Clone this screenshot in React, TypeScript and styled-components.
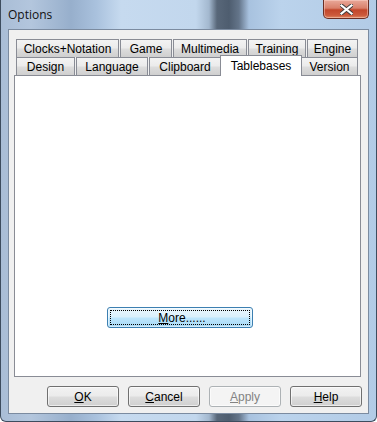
import React from "react";
import styled, { createGlobalStyle } from "styled-components";

const GlobalStyle = createGlobalStyle`
  html, body {
    margin: 0;
    padding: 0;
    background: #ffffff;
  }
  body {
    font-family: "Liberation Sans", Arial, sans-serif;
    font-size: 12px;
  }
`;

const topRow = [
  { label: "Clocks+Notation", width: 103 },
  { label: "Game", width: 52 },
  { label: "Multimedia", width: 74 },
  { label: "Training", width: 58 },
  { label: "Engine", width: 51 },
];

const frontRow = [
  { label: "Design", width: 59 },
  { label: "Language", width: 72 },
  { label: "Clipboard", width: 72 },
  { label: "Tablebases", width: 78, selected: true },
  { label: "Version", width: 57 },
];

const buttons = [
  { key: "O", rest: "K" },
  { key: "C", rest: "ancel" },
  { key: "A", rest: "pply", disabled: true },
  { key: "H", rest: "elp" },
];

const App = () => {
  return (
    <>
      <GlobalStyle />
      <Window>
        <TitleBar>
          <Title>Options</Title>
          <CloseButton>
            <svg width="13" height="11" viewBox="0 0 13 11">
              <path
                d="M1.5 1.5 L11.5 9.5 M11.5 1.5 L1.5 9.5"
                stroke="#3b3b3b"
                strokeWidth="4"
                strokeLinecap="square"
              />
              <path
                d="M1.5 1.5 L11.5 9.5 M11.5 1.5 L1.5 9.5"
                stroke="#ffffff"
                strokeWidth="2.2"
                strokeLinecap="square"
              />
            </svg>
          </CloseButton>
        </TitleBar>
        <Client>
          <TabRow>
            {topRow.map((t) => (
              <Tab key={t.label} width={t.width}>
                {t.label}
              </Tab>
            ))}
          </TabRow>
          <TabRow>
            {frontRow.map((t) =>
              t.selected ? (
                <SelectedTab key={t.label} width={t.width}>
                  {t.label}
                </SelectedTab>
              ) : (
                <Tab key={t.label} width={t.width}>
                  {t.label}
                </Tab>
              )
            )}
          </TabRow>
          <Panel>
            <MoreButton>
              <FocusRing>
                <u>M</u>ore......
              </FocusRing>
            </MoreButton>
          </Panel>
          <ButtonBar>
            {buttons.map((b) => (
              <DialogButton key={b.key} disabled={b.disabled}>
                <u>{b.key}</u>
                {b.rest}
              </DialogButton>
            ))}
          </ButtonBar>
        </Client>
      </Window>
    </>
  );
};

const Window = styled.div`
  width: 377px;
  height: 422px;
  box-sizing: border-box;
  display: flex;
  flex-direction: column;
  border: 1px solid #3d4c5e;
  border-top: none;
  border-radius: 0 0 6px 6px;
  background: linear-gradient(
    to right,
    #a9bdd6 0px,
    #b3c6dd 30px,
    #97afcc 70px,
    #a9c1dd 95px,
    #c6daef 120px,
    #c2d7ed 195px,
    #a3b8cf 208px,
    #586779 216px,
    #4e5d6f 228px,
    #64758a 238px,
    #a8c2df 248px,
    #bbd3ec 280px,
    #b2cbe6 377px
  );
`;

const TitleBar = styled.div`
  height: 29px;
  flex: none;
  display: flex;
  align-items: flex-start;
  justify-content: space-between;
  padding: 0 7px 0 7px;
`;

const Title = styled.div`
  font-family: "Open Sans", "Liberation Sans", sans-serif;
  font-size: 12px;
  color: #111;
  margin-top: 6px;
`;

const CloseButton = styled.div`
  width: 46px;
  height: 19px;
  box-sizing: border-box;
  display: flex;
  align-items: center;
  justify-content: center;
  border: 1px solid #6a2e24;
  border-top: none;
  border-radius: 0 0 5px 5px;
  background: linear-gradient(
    to bottom,
    #e9a99a 0%,
    #d9806b 45%,
    #c2462b 55%,
    #cc5a3c 85%,
    #e08a63 100%
  );
  box-shadow: inset 0 0 0 1px rgba(255, 220, 210, 0.45);
`;

const Client = styled.div`
  flex: 1;
  margin: 0 7px 7px 7px;
  box-sizing: border-box;
  background: #f0f0f0;
  border: 1px solid #7b8ba0;
  padding: 9px 7px 0 5px;
  display: flex;
  flex-direction: column;
`;

const TabRow = styled.div`
  display: flex;
  gap: 1px;
  padding-left: 2px;
  height: 18px;
`;

const Tab = styled.div<{ width: number }>`
  width: ${(p) => p.width}px;
  height: 18px;
  box-sizing: border-box;
  flex: none;
  border: 1px solid #898c95;
  border-bottom: none;
  background: linear-gradient(
    to bottom,
    #f3f3f3 0%,
    #ebebeb 48%,
    #dddddd 52%,
    #cfcfcf 100%
  );
  color: #000;
  display: flex;
  align-items: center;
  justify-content: center;
  padding-top: 1px;
  white-space: nowrap;
`;

const SelectedTab = styled.div<{ width: number }>`
  width: ${(p) => p.width + 4}px;
  height: 21px;
  box-sizing: border-box;
  flex: none;
  margin: -2px -2px -1px -2px;
  position: relative;
  z-index: 1;
  border: 1px solid #898c95;
  border-bottom: none;
  background: #ffffff;
  color: #000;
  display: flex;
  justify-content: center;
  padding-top: 3px;
  white-space: nowrap;
`;

const Panel = styled.div`
  height: 302px;
  box-sizing: border-box;
  border: 1px solid #898c95;
  background: #ffffff;
  display: flex;
  flex-direction: column;
  padding: 231px 0 0 92px;
`;

const MoreButton = styled.div`
  width: 146px;
  height: 21px;
  box-sizing: border-box;
  border: 1px solid #3c7fb1;
  border-radius: 3px;
  padding: 2px;
  background: linear-gradient(
    to bottom,
    #eaf6fd 0%,
    #d9f0fc 48%,
    #bee6fd 52%,
    #a7d9f5 100%
  );
  box-shadow: inset 0 0 0 1px rgba(255, 255, 255, 0.5);
`;

const FocusRing = styled.div`
  height: 100%;
  box-sizing: border-box;
  border: 1px dotted #000;
  display: flex;
  align-items: center;
  justify-content: center;
  color: #000;
  padding-left: 4px;
`;

const ButtonBar = styled.div`
  display: flex;
  justify-content: flex-end;
  gap: 9px;
  margin-top: 9px;
  margin-right: -1px;
`;

const DialogButton = styled.div<{ disabled?: boolean }>`
  width: 72px;
  height: 21px;
  box-sizing: border-box;
  border: 1px solid ${(p) => (p.disabled ? "#adb2b5" : "#707070")};
  border-radius: 3px;
  background: ${(p) =>
    p.disabled
      ? "#f4f4f4"
      : "linear-gradient(to bottom, #f2f2f2 0%, #ebebeb 48%, #dddddd 52%, #cfcfcf 100%)"};
  box-shadow: inset 0 0 0 1px rgba(255, 255, 255, 0.6);
  color: ${(p) => (p.disabled ? "#838383" : "#000")};
  display: flex;
  align-items: center;
  justify-content: center;
`;

export default App;
